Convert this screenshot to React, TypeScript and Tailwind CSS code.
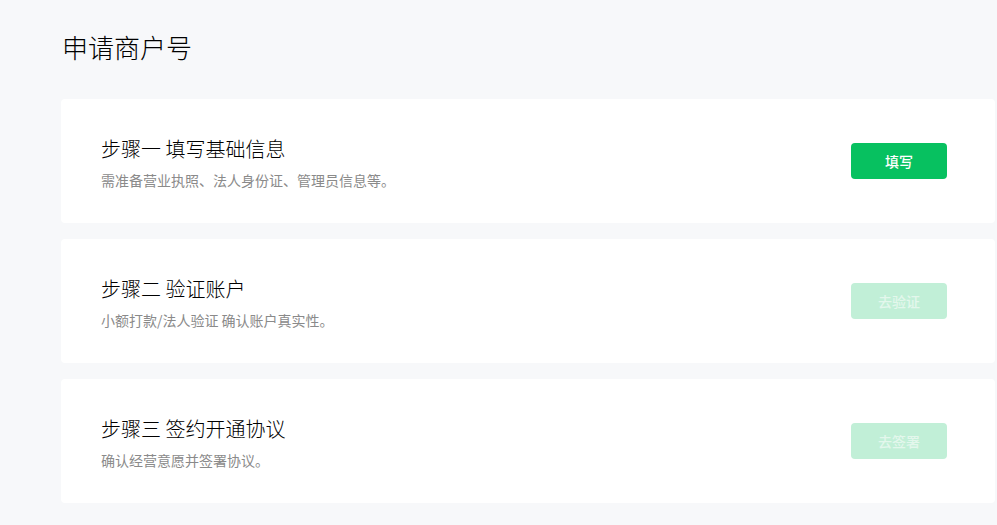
import React from "react";

const steps = [
  { title: "步骤一 填写基础信息", desc: "需准备营业执照、法人身份证、管理员信息等。", btn: "填写", active: true },
  { title: "步骤二 验证账户", desc: "小额打款/法人验证 确认账户真实性。", btn: "去验证", active: false },
  { title: "步骤三 签约开通协议", desc: "确认经营意愿并签署协议。", btn: "去签署", active: false },
];

export default function App() {
  return (
    <div
      className="min-h-[525px] w-[997px] overflow-hidden bg-[#f7f8fa] pl-[61px] pt-[29px]"
      style={{ fontFamily: '"Noto Sans CJK SC", "Noto Sans", sans-serif' }}
    >
      <h1 className="text-[26px] leading-[36px] text-[#000000] font-light pl-[1px]">申请商户号</h1>
      <div className="mt-[34px] flex flex-col gap-[16px]">
        {steps.map((s) => (
          <div
            key={s.title}
            className="flex h-[124px] w-[934px] items-center justify-between rounded-[4px] bg-white pl-[40px] pr-[48px]"
          >
            <div className="pt-[3px]">
              <div className="text-[20px] leading-[28px] font-light text-[#000000]">{s.title}</div>
              <div className="mt-[7px] text-[14px] leading-[20px] text-[#8a8a8a]">{s.desc}</div>
            </div>
            <button
              className={
                s.active
                  ? "h-[36px] w-[96px] rounded-[4px] bg-[#07c160] text-[14px] font-medium text-white"
                  : "h-[36px] w-[96px] rounded-[4px] bg-[#c1efd7] text-[14px] font-medium text-[#e3f7ec]"
              }
            >
              {s.btn}
            </button>
          </div>
        ))}
      </div>
    </div>
  );
}
